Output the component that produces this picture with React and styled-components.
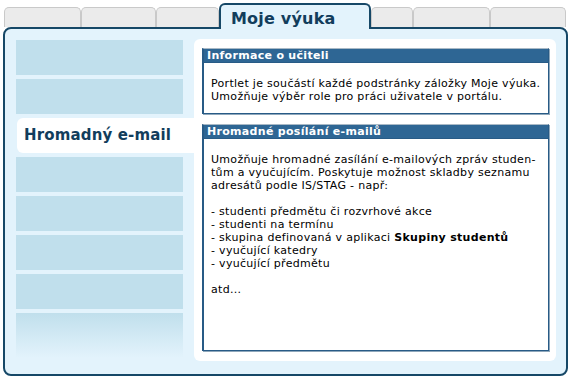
import React from "react";
import styled, { createGlobalStyle } from "styled-components";

const Global = createGlobalStyle`
  html, body { margin: 0; padding: 0; background: #ffffff; }
  body { font-family: "DejaVu Sans", Verdana, sans-serif; }
`;

const Page = styled.div`
  width: 571px;
  height: 380px;
  box-sizing: border-box;
  display: flex;
  flex-direction: column;
`;

const TabBar = styled.div`
  height: 27px;
  display: flex;
  align-items: flex-end;
  padding-left: 4px;
`;

const Tab = styled.div`
  box-sizing: border-box;
  width: ${(p) => p.$w}px;
  height: 20px;
  background: #ebebeb;
  border: 1px solid #c9c9c9;
  border-bottom: none;
  border-radius: 5px 5px 0 0;
`;

const ActiveTab = styled.div`
  position: relative;
  z-index: 1;
  box-sizing: border-box;
  width: 152px;
  height: 26px;
  margin-bottom: -2px;
  background: #e3f3fc;
  border: 2px solid #164867;
  border-bottom: none;
  border-radius: 6px 6px 0 0;
  padding: 5px 0 0 10px;
  font-weight: bold;
  font-size: 16px;
  line-height: 18px;
  letter-spacing: 0.2px;
  color: #123d5c;
  white-space: nowrap;
`;

const Panel = styled.div`
  margin: 0 3px;
  height: 349px;
  box-sizing: border-box;
  border: 2px solid #164867;
  border-radius: 8px;
  background: #e3f3fc;
  display: flex;
  padding: 10px 10px 13px 11px;
`;

const Sidebar = styled.div`
  width: 167px;
  flex-shrink: 0;
  margin-top: 1px;
  display: flex;
  flex-direction: column;
  gap: 4px;
`;

const SideItem = styled.div`
  height: ${(p) => p.$h || 35}px;
  background: ${(p) =>
    p.$fade ? "linear-gradient(to bottom, #c0dfec 0%, #e3f3fc 100%)" : "#c0dfec"};
`;

const SideActive = styled.div`
  height: 35px;
  margin-left: 1px;
  margin-right: -11px;
  background: #ffffff;
  border-radius: 6px 0 0 6px;
  box-sizing: border-box;
  padding: 8px 0 0 7px;
  font-weight: bold;
  font-size: 15px;
  line-height: 18px;
  letter-spacing: 0.15px;
  color: #123d5c;
  white-space: nowrap;
`;

const Content = styled.div`
  flex: 1;
  margin-left: 11px;
  background: #ffffff;
  border-radius: 6px;
  padding: 9px 7px 10px 8px;
  display: flex;
  flex-direction: column;
  gap: 10px;
`;

const Portlet = styled.div`
  display: flex;
  flex-direction: column;
  flex: ${(p) => (p.$grow ? 1 : "none")};
  border: 1px solid #285b86;
  border-top-color: #a9b9c6;
  border-left-width: 2px;
  box-shadow: 1px 1px 0 #8ea7bb;
`;

const PortletHeader = styled.div`
  height: 13px;
  background: #2e6694;
  color: #ffffff;
  font-weight: bold;
  font-size: 11px;
  line-height: 14px;
  letter-spacing: 0.3px;
  padding-left: 3px;
  white-space: nowrap;
`;

const PortletBody = styled.div`
  flex: 1;
  border-top: 1px solid #285b86;
  padding: 14px 8px 10px 7px;
  font-size: 11px;
  line-height: 13px;
  letter-spacing: 0.3px;
  color: #000000;
  white-space: nowrap;
`;

const Para = styled.p`
  margin: 0 0 13px 0;
  &:last-child { margin-bottom: 0; }
`;

export default function App() {
  return (
    <>
      <Global />
      <Page>
        <TabBar>
          <Tab $w={77} />
          <Tab $w={75} />
          <Tab $w={63} />
          <ActiveTab>Moje výuka</ActiveTab>
          <Tab $w={42} />
          <Tab $w={77} />
          <Tab $w={76} />
        </TabBar>
        <Panel>
          <Sidebar>
            <SideItem />
            <SideItem />
            <SideActive>Hromadný e-mail</SideActive>
            <SideItem />
            <SideItem />
            <SideItem />
            <SideItem />
            <SideItem $fade $h={45} />
          </Sidebar>
          <Content>
            <Portlet>
              <PortletHeader>Informace o učiteli</PortletHeader>
              <PortletBody>
                Portlet je součástí každé podstránky záložky Moje výuka.
                <br />
                Umožňuje výběr role pro práci uživatele v portálu.
              </PortletBody>
            </Portlet>
            <Portlet $grow>
              <PortletHeader>Hromadné posílání e-mailů</PortletHeader>
              <PortletBody>
                <Para>
                  Umožňuje hromadné zasílání e-mailových zpráv studen-
                  <br />
                  tům a vyučujícím. Poskytuje možnost skladby seznamu
                  <br />
                  adresátů podle IS/STAG - např:
                </Para>
                <Para>
                  - studenti předmětu či rozvrhové akce
                  <br />
                  - studenti na termínu
                  <br />
                  - skupina definovaná v aplikaci <b>Skupiny studentů</b>
                  <br />
                  - vyučující katedry
                  <br />
                  - vyučující předmětu
                </Para>
                <Para>atd...</Para>
              </PortletBody>
            </Portlet>
          </Content>
        </Panel>
      </Page>
    </>
  );
}
